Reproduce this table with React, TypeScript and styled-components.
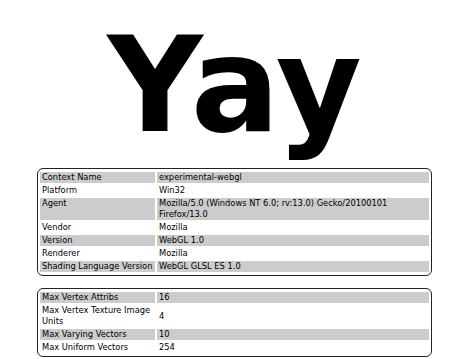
import styled, { createGlobalStyle } from "styled-components"

const GlobalStyle = createGlobalStyle`
  html, body {
    margin: 0;
    padding: 0;
    background: #ffffff;
  }
`

const Page = styled.div`
  padding: 20px 38px 0 37px;
  font-family: "DejaVu Sans", Verdana, sans-serif;
  color: #000;
`

const Title = styled.h1`
  margin: 0 0 18px;
  text-align: center;
  font-family: "DejaVu Sans", Verdana, sans-serif;
  font-weight: bold;
  font-size: 132px;
  line-height: 130px;
`

const Panel = styled.div`
  border: 1px solid #222;
  border-radius: 6px;
  padding: 1px 0;
  margin-bottom: 12px;
  overflow: hidden;
`

const InfoTable = styled.table`
  width: 100%;
  border-spacing: 2px;
  font-size: 8.3px;
  line-height: 11px;
`

const Row = styled.tr<{ $shaded: boolean }>`
  background: ${({ $shaded }) => ($shaded ? "#cccccc" : "transparent")};
`

const Cell = styled.td<{ $valign: "top" | "middle"; $label?: boolean }>`
  padding: 0 2px;
  vertical-align: ${({ $valign }) => $valign};
  width: ${({ $label }) => ($label ? "111px" : "auto")};
`

type Entry = [string, string]

const contextInfo: Entry[] = [
  ["Context Name", "experimental-webgl"],
  ["Platform", "Win32"],
  ["Agent", "Mozilla/5.0 (Windows NT 6.0; rv:13.0) Gecko/20100101 Firefox/13.0"],
  ["Vendor", "Mozilla"],
  ["Version", "WebGL 1.0"],
  ["Renderer", "Mozilla"],
  ["Shading Language Version", "WebGL GLSL ES 1.0"],
]

const limits: Entry[] = [
  ["Max Vertex Attribs", "16"],
  ["Max Vertex Texture Image Units", "4"],
  ["Max Varying Vectors", "10"],
  ["Max Uniform Vectors", "254"],
]

const InfoPanel = ({ rows, valign }: { rows: Entry[]; valign: "top" | "middle" }) => (
  <Panel>
    <InfoTable>
      <tbody>
        {rows.map(([label, value], i) => (
          <Row key={label} $shaded={i % 2 === 0}>
            <Cell $valign={valign} $label>
              {label}
            </Cell>
            <Cell $valign={valign}>{value}</Cell>
          </Row>
        ))}
      </tbody>
    </InfoTable>
  </Panel>
)

export default function App() {
  return (
    <Page>
      <GlobalStyle />
      <Title>Yay</Title>
      <InfoPanel rows={contextInfo} valign="top" />
      <InfoPanel rows={limits} valign="middle" />
    </Page>
  )
}
